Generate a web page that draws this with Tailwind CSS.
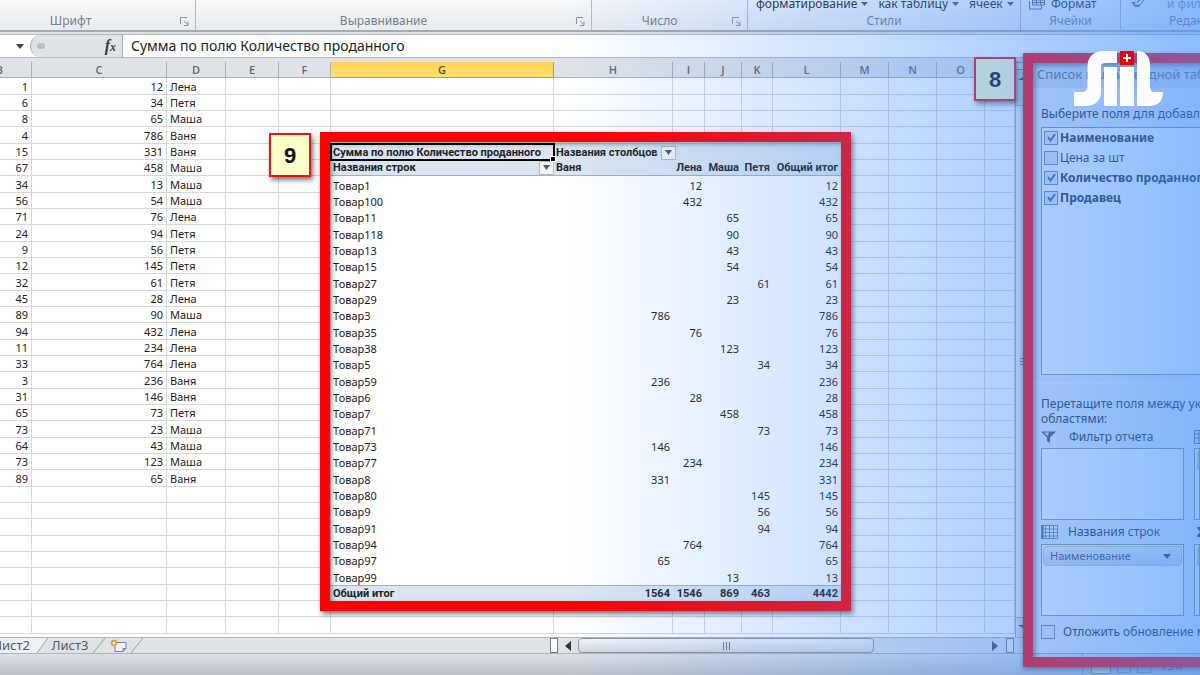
<!DOCTYPE html>
<html lang="ru">
<head>
<meta charset="utf-8">
<title>Сводная таблица</title>
<script src="https://cdn.jsdelivr.net/npm/@tailwindcss/browser@4"></script>
</head>
<body class="relative flex h-screen flex-col overflow-hidden bg-[#dfe3e8] font-['Noto_Sans',sans-serif] text-[11px] text-[#222]">

<!-- Ribbon -->
<header class="flex h-8 shrink-0 overflow-hidden border-b-2 border-[#a5abb2] bg-linear-to-b from-[#f8f9fa] to-[#e9ecef] text-xs text-[#767c88]">
  <section class="relative flex w-[196px] shrink-0 items-end justify-center border-r border-[#b4bac2] pr-[54px]">
    <h2 class="leading-[18px]">Шрифт</h2>
    <button aria-label="Параметры шрифта" class="absolute right-1.5 bottom-1"><svg width="9" height="9" fill="none" stroke="#8c929a"><path d="M.5 7V.5H7M4 4l4 4M8 4.500V8.500H4"/></svg></button>
  </section>
  <section class="relative flex w-[396px] shrink-0 items-end justify-center border-r border-[#b4bac2] pr-5">
    <h2 class="leading-[18px]">Выравнивание</h2>
    <button aria-label="Параметры выравнивания" class="absolute right-1.5 bottom-1"><svg width="9" height="9" fill="none" stroke="#8c929a"><path d="M.5 7V.5H7M4 4l4 4M8 4.500V8.500H4"/></svg></button>
  </section>
  <section class="relative flex w-[156px] shrink-0 items-end justify-center border-r border-[#b4bac2] pr-5">
    <h2 class="leading-[18px]">Число</h2>
    <button aria-label="Параметры числа" class="absolute right-1.5 bottom-1"><svg width="9" height="9" fill="none" stroke="#8c929a"><path d="M.5 7V.5H7M4 4l4 4M8 4.500V8.500H4"/></svg></button>
  </section>
  <section class="flex w-[273px] shrink-0 flex-col justify-end border-r border-[#b4bac2] text-center">
    <div class="flex gap-2.5 pl-2 whitespace-nowrap text-[#24272c]">
      <button class="flex items-center gap-1 leading-4">форматирование <svg width="7" height="4"><path d="M0 0h7L3.500 4z" fill="#555"/></svg></button>
      <button class="flex items-center gap-1 leading-4">как таблицу <svg width="7" height="4"><path d="M0 0h7L3.500 4z" fill="#555"/></svg></button>
      <button class="flex items-center gap-1 leading-4">ячеек <svg width="7" height="4"><path d="M0 0h7L3.500 4z" fill="#555"/></svg></button>
    </div>
    <h2 class="leading-[18px]">Стили</h2>
  </section>
  <section class="flex w-[100px] shrink-0 flex-col justify-end border-r border-[#b4bac2] text-center">
    <button class="flex items-center gap-1 pl-2 leading-4 text-[#24272c]"><svg width="18" height="14" fill="none" stroke="#5a6478"><path d="M3.500 0v8h12V3H3.500M7.500 3v5M11.500 3v5M3.500 5.500h12M.5 4v8h12v-4" /></svg>Формат</button>
    <h2 class="leading-[18px]">Ячейки</h2>
  </section>
  <section class="flex grow flex-col justify-end whitespace-nowrap">
    <div class="flex gap-5 pl-2.5 leading-4 text-[#8d929c]"><svg width="16" height="14"><path d="M0 6h6l3-4h6l-7 9H4z" fill="#6b7280"/><path d="M4 7.500h4l3-3.500" fill="none" stroke="#fff" stroke-width="2"/></svg><button>и фильтр</button></div>
    <h2 class="pl-12 leading-[18px]">Редактирование</h2>
  </section>
</header>

<!-- Formula bar -->
<div class="mt-0.5 mb-1 flex h-6 shrink-0 border-y border-[#b4b9c0] bg-white">
  <div class="flex w-[30px] items-center justify-end pr-1.5"><button aria-label="Поле имени"><svg width="8" height="5"><path d="M0 0h8L4 5z" fill="#444"/></svg></button></div>
  <div class="flex w-[93px] items-center justify-between rounded-l-full border-r border-l border-[#a9aeb5] bg-[#dfe3e8] pr-1.5 pl-1.5">
    <span class="h-1.5 w-2 rounded-full bg-[#b9bdc4]"></span>
    <button aria-label="Вставить функцию" class="font-['Liberation_Serif',serif] text-base leading-none font-bold text-[#3a3d42] italic">f<span class="text-xs">x</span></button>
  </div>
  <input aria-label="Строка формул" value="Сумма по полю Количество проданного" class="min-w-0 grow px-2 text-sm text-[#1e1e1e] outline-none">
</div>

<!-- Workspace -->
<main class="flex min-h-0 grow">
  <div class="relative flex min-w-0 grow flex-col">
    <div class="min-h-0 grow overflow-hidden bg-white">
      <table class="w-[1015px] table-fixed border-separate border-spacing-0">
        <colgroup>
          <col class="w-[32px]"><col class="w-[135px]"><col class="w-[59px]"><col class="w-[53px]"><col class="w-[52px]"><col class="w-[223px]"><col class="w-[119px]"><col class="w-[32px]"><col class="w-[37px]"><col class="w-[31px]"><col class="w-[68px]"><col class="w-[48px]"><col class="w-[48px]"><col class="w-[48px]"><col class="w-[30px]">
        </colgroup>
        <thead><tr id="letters" class="h-4"></tr></thead>
        <tbody id="cells"></tbody>
      </table>
    </div>

    <!-- Sheet tabs and horizontal scroll bar -->
    <nav class="flex h-[17px] shrink-0 border-y border-[#aeb4bc] bg-[#dfe3e8] text-[13px] leading-[15px] text-[#555b66]">
      <div class="flex w-[550px] shrink-0">
        <button class="w-[36px] overflow-hidden bg-[#edf0f4] pr-1.5"><span class="float-right">Лист2</span></button>
        <svg class="shrink-0" width="12" height="15"><path d="M0 0h12L0 15z" fill="#edf0f4"/><path d="M12 0 1 15" stroke="#9aa0a8"/></svg>
        <button class="w-[44px] shrink-0 text-center">Лист3</button>
        <svg class="shrink-0" width="14" height="15"><path d="M13 0 1 15" stroke="#9aa0a8"/></svg>
        <button aria-label="Вставить лист" class="flex w-[24px] items-center pl-1"><svg width="18" height="14"><path d="M5 3.500h11v6l-3 3H5z" fill="#f2f5fb" stroke="#6b7fa8"/><path d="M16 9.500h-3v3" fill="#93a8d0" stroke="#6b7fa8"/><circle cx="4" cy="4" r="2.500" fill="#fff0c0" stroke="#e59a2c" stroke-width="1.500"/></svg></button>
        <svg class="shrink-0" width="14" height="15"><path d="M13 0 1 15" stroke="#9aa0a8"/></svg>
      </div>
      <span class="w-2 border border-[#777d86] bg-white"></span>
      <button aria-label="Прокрутить влево" class="flex w-5 items-center justify-center"><svg width="6" height="10"><path d="M6 0v10L0 5z" fill="#333"/></svg></button>
      <div class="flex w-[296px] items-center justify-center gap-0.5 rounded-sm border border-[#8f959d] bg-linear-to-b from-[#f4f5f7] to-[#d5d9df]">
        <span class="h-2 w-px bg-[#777]"></span><span class="h-2 w-px bg-[#777]"></span><span class="h-2 w-px bg-[#777]"></span>
      </div>
      <div class="flex grow items-center justify-end gap-2 pr-2.5">
        <button aria-label="Прокрутить вправо"><svg width="6" height="10"><path d="M0 0v10l6-5z" fill="#444a55"/></svg></button>
        <span class="h-full w-2 border border-[#777d86] bg-[#eef1f5]"></span>
      </div>
    </nav>

    <!-- Vertical scroll bar -->
    <div class="absolute top-0 right-0 bottom-[17px] flex w-[9px] flex-col border-l border-[#9fa5ae] bg-[#dfe3e8]">
      <span class="h-2 border-y border-[#8f959d] bg-[#eef1f5]"></span>
      <svg class="mt-1 shrink-0" width="9" height="7"><path d="M2 6h8V1z" fill="#444a55"/></svg>
      <span class="mt-6 flex grow flex-col items-end justify-center gap-0.5 border-y border-[#a5abb5] bg-[#eceff3]">
        <i class="h-px w-1 bg-[#777]"></i><i class="h-px w-1 bg-[#777]"></i><i class="h-px w-1 bg-[#777]"></i>
      </span>
      <svg class="my-1.5 shrink-0" width="9" height="7"><path d="M2 1h8v5z" fill="#444a55"/></svg>
    </div>

    <!-- Callout 9: pivot table frame -->
    <div class="pointer-events-none absolute top-[70px] left-[320px] h-[479px] w-[531px] border-[10px] border-[#ff0000] shadow-[2px_3px_5px_#0008,inset_2px_2px_4px_#0006]"></div>
    <div class="absolute top-[71px] left-[269px] flex h-11 w-[42px] items-center justify-center border-2 border-[#e8121c] bg-[#ffffc8] font-['Liberation_Sans',sans-serif] text-[22px] font-bold text-[#111] shadow-[2px_3px_5px_#0008]">9</div>
    <div class="absolute -top-[5px] left-[974px] z-20 flex h-11 w-[42px] items-center justify-center border-2 border-[#e8121c] bg-[#ffffc8] font-['Liberation_Sans',sans-serif] text-[22px] font-bold text-[#111] shadow-[2px_3px_5px_#0008]">8</div>
  </div>

  <!-- Field list -->
  <aside class="relative flex w-[176px] shrink-0 flex-col border-b border-[#9aa1ab] bg-[#e9edf3] pl-[17px] text-xs whitespace-nowrap text-[#1c222c]">
    <h2 class="-ml-4 flex h-[26px] shrink-0 items-center overflow-hidden bg-[#d6dbe3] pl-3 text-[13px] text-[#5f6775]">Список полей сводной таблицы</h2>
    <p class="mt-4 h-5 overflow-hidden leading-5">Выберите поля для добавления в отчет:</p>
    <div id="fields" class="mt-[3px] flex h-[248px] shrink-0 flex-col gap-px border border-r-0 border-[#858d99] bg-white pl-0.5"></div>
    <hr class="mt-2 -ml-4 border-[#f6f8fa]">
    <p class="mt-3 overflow-hidden leading-[15px]">Перетащите поля между указанными<br>областями:</p>
    <div class="flex gap-2.5">
      <section class="w-[143px] shrink-0">
        <h3 class="flex h-[22px] items-center gap-3"><svg width="16" height="13"><path d="M0 .5h15L9 6.500V12l-3-2V6.500z" fill="#474e5a"/><path d="M3 1.500h5L6.500 5z" fill="#dfe4ec"/></svg>Фильтр отчета</h3>
        <div class="h-[72px] border border-[#858d99] bg-white"></div>
      </section>
      <section class="grow overflow-hidden">
        <h3 class="flex h-[22px] items-center"><svg width="16" height="14" fill="none" stroke="#5f6774"><path d="M.5.5h15v13H.5zM0 4h16M0 8h16M5 0v14M10 0v14"/></svg></h3>
        <div class="h-[72px] border border-[#858d99] bg-white pt-0.5 pl-0.5"><div class="h-[19px] rounded-sm border border-[#d8cf8a] bg-[#e6eaf0]"></div></div>
      </section>
    </div>
    <div class="flex gap-2.5">
      <section class="w-[143px] shrink-0">
        <h3 class="flex h-6 items-center gap-2.5"><svg width="17" height="14" fill="none" stroke="#5f7ba8"><path d="M.5.5h16v13H.5z" fill="#fff"/><path d="M0 4h17M0 7.500h17M0 11h17M4.500 0v14M8.500 0v14M12.500 0v14"/><path d="M1.500 0v14" stroke="#59606c" stroke-width="2"/></svg>Названия строк</h3>
        <div class="h-[72px] border border-[#858d99] bg-white pt-px">
          <button class="mx-px flex h-5 w-[139px] items-center justify-between rounded-sm border border-[#d8cf6a] bg-linear-to-b from-[#eef1f5] to-[#d3d9e2] pr-2.5 pl-1.5 text-[11px] text-[#3c434f]">Наименование<svg width="8" height="5"><path d="M0 0h8L4 5z" fill="#2b3548"/></svg></button>
        </div>
      </section>
      <section class="grow overflow-hidden">
        <h3 class="flex h-6 items-center pl-[3px] text-sm font-bold">Σ</h3>
        <div class="h-[72px] border border-[#858d99] bg-white pt-0.5 pl-0.5"><div class="h-[19px] rounded-sm border border-[#d8cf8a] bg-[#e6eaf0]"></div></div>
      </section>
    </div>
    <label class="mt-1.5 flex items-center gap-2 overflow-hidden leading-5"><input type="checkbox" class="size-3.5 shrink-0 appearance-none border border-[#7c8593] bg-[#e4e8ee]">Отложить обновление макета</label>
    <div class="pointer-events-none absolute -top-[9px] -right-2.5 -bottom-3.5 -left-px z-10 border-[10px] border-[#ff0000] shadow-[0_2px_5px_#0008,inset_3px_3px_4px_#0006]"></div>
  </aside>
</main>

<!-- Status bar -->
<footer class="flex h-[21px] shrink-0 items-start justify-end bg-linear-to-b from-[#dde1e6] to-[#bec2c8] text-[#555b66]">
  <div class="flex h-full w-[118px] items-center gap-1.5 overflow-hidden border-l border-[#999fa8] pt-1 pl-2">
    <span class="h-3.5 w-5 border border-[#8c8f70] bg-[#e8e2a8]"></span>
    <span class="h-3 w-3.5 border border-[#888e98]"></span>
    <span class="h-3 w-3.5 border border-[#888e98]"></span>
    <span class="pl-1">75%</span>
  </div>
</footer>

<!-- Blue wash and channel logo -->
<div class="pointer-events-none absolute inset-0 z-30 bg-linear-to-r from-[#438fff]/0 from-47% to-[#438fff]/60 to-100%"></div>
<svg class="absolute top-[51px] right-9 z-40" width="90" height="55" viewBox="0 0 90 55" role="img" aria-label="SIIL">
  <g fill="#fff">
    <path d="M43 0H30C18 0 13.500 7 13.500 16V35Q13.500 41 8 41H0V55H11C22 55 27 49 27 40V16Q27 12 31 12H43Z"/>
    <path d="M30 16H43V55H30zM46 16H60V55H46zM63 0C72 0 76 6 76 14V36Q76 41 81 41H89C89 50 84 55 75 55H63Z"/>
  </g>
  <path d="M46 0H60V14H46z" fill="#e80010"/>
  <path d="M53 3v8M49 7h8" stroke="#fff" stroke-width="2"/>
</svg>

<script>
const left = [[1,12,'Лена'],[6,34,'Петя'],[8,65,'Маша'],[4,786,'Ваня'],[15,331,'Ваня'],[67,458,'Маша'],[34,13,'Маша'],[56,54,'Маша'],[71,76,'Лена'],[24,94,'Петя'],[9,56,'Петя'],[12,145,'Петя'],[32,61,'Петя'],[45,28,'Лена'],[89,90,'Маша'],[94,432,'Лена'],[11,234,'Лена'],[33,764,'Лена'],[3,236,'Ваня'],[31,146,'Ваня'],[65,73,'Петя'],[73,23,'Маша'],[64,43,'Маша'],[73,123,'Маша'],[89,65,'Ваня']];
// product, column index of the seller (6 Ваня, 7 Лена, 8 Маша, 9 Петя), quantity
const pivot = [[1,7,12],[100,7,432],[11,8,65],[118,8,90],[13,8,43],[15,8,54],[27,9,61],[29,8,23],[3,6,786],[35,7,76],[38,8,123],[5,9,34],[59,6,236],[6,7,28],[7,8,458],[71,9,73],[73,6,146],[77,7,234],[8,6,331],[80,9,145],[9,9,56],[91,9,94],[94,7,764],[97,6,65],[99,8,13]];
const arrow = '<button aria-label="Фильтр" class="flex h-3.5 w-[15px] shrink-0 items-center justify-center border border-[#b5b9c0] bg-[#f4f5f7]"><svg width="7" height="5"><path d="M0 0h7L3.500 5z" fill="#555"/></svg></button>';

'BCDEFGHIJKLMNOP'.split('').forEach(l => {
  const th = document.createElement('th');
  th.scope = 'col';
  th.className = l === 'G'
    ? "border-r border-b border-[#c99a2e] bg-linear-to-b from-[#fbcf55] to-[#ffe36e] p-0 font-['Open_Sans',sans-serif] leading-[15px] font-semibold text-[#5a5230]"
    : "border-r border-b border-[#a9afb8] bg-[#dfe3e8] p-0 font-['Open_Sans',sans-serif] leading-[15px] font-semibold text-[#5f6570]";
  th.textContent = l === 'P' ? '' : l;
  if (l === 'B') th.innerHTML = '<span class="-ml-8">B</span>';
  letters.append(th);
});

for (let r = 0; r < 34; r++) {
  const row = Array(15).fill('');
  if (left[r]) left[r].forEach((v, i) => row[i] = v);
  if (r === 4) {
    row[5] = 'Сумма по полю Количество проданного<span class="absolute -right-0.5 -bottom-0.5 size-1.5 border border-white bg-black"></span>';
    row[6] = '<div class="flex items-center gap-[3px]">Названия столбцов' + arrow + '</div>';
  }
  if (r === 5) { ['<div class="flex items-center justify-between">Названия строк' + arrow + '</div>','Ваня','Лена','Маша','Петя','Общий итог'].forEach((v, i) => row[5 + i] = v); }
  const p = pivot[r - 6];
  if (p) { row[5] = 'Товар' + p[0]; row[p[1]] = p[2]; row[10] = p[2]; }
  if (r === 31) ['Общий итог',1564,1546,869,463,4442].forEach((v, i) => row[5 + i] = v);
  const tr = document.createElement('tr');
  tr.className = r % 3 === 0 ? 'h-[17px]' : 'h-4';
  row.forEach((v, c) => {
    const td = document.createElement('td');
    td.innerHTML = v;
    td.className = 'p-0 align-bottom leading-[15px] whitespace-nowrap';
    td.classList.add(typeof v === 'number' || (r === 5 && c > 6) ? 'text-right' : 'text-left');
    td.classList.add(c === 5 || c === 6 ? 'pl-[2px]' : c === 2 ? 'pl-[3px]' : 'pl-0');
    td.classList.add(c === 5 || (r === 4 && c > 4) || (r === 5 && c === 6) ? 'pr-0' : 'pr-[3px]');
    const inPivot = r > 3 && r < 32 && c > 4 && c < 11;
    if (!inPivot) td.classList.add('border-r', 'border-b', 'border-[#d6d8dc]');
    else if (r < 6 || r === 31) td.classList.add('bg-[#dbe5f1]', 'font-bold', "font-['Roboto',sans-serif]", 'border-[#95b3d7]');
    if (inPivot && r === 5) td.classList.add('border-b');
    if (inPivot && r === 31) td.classList.add('border-t');
    if (r === 4 && c === 5) td.classList.add('relative', 'outline-2', 'outline-black', '-outline-offset-1');
    tr.append(td);
  });
  cells.append(tr);
}

[['Наименование',1],['Цена за шт',0],['Количество проданного',1],['Продавец',1]].forEach(([name, on]) => {
  const l = document.createElement('label');
  l.className = 'relative flex h-[19px] shrink-0 items-center gap-0.5 overflow-hidden ' + (on ? 'font-bold' : 'font-normal');
  l.innerHTML = '<input type="checkbox" class="size-3.5 shrink-0 appearance-none border border-[#7c8593] bg-[#e4e8ee]">' + name +
    (on ? '<svg class="absolute left-[3px]" width="9" height="9"><path d="M1 4l2.500 3.500L8 1" fill="none" stroke="#3c5a9a" stroke-width="2"/></svg>' : '');
  l.querySelector('input').checked = !!on;
  fields.append(l);
});
</script>
</body>
</html>
